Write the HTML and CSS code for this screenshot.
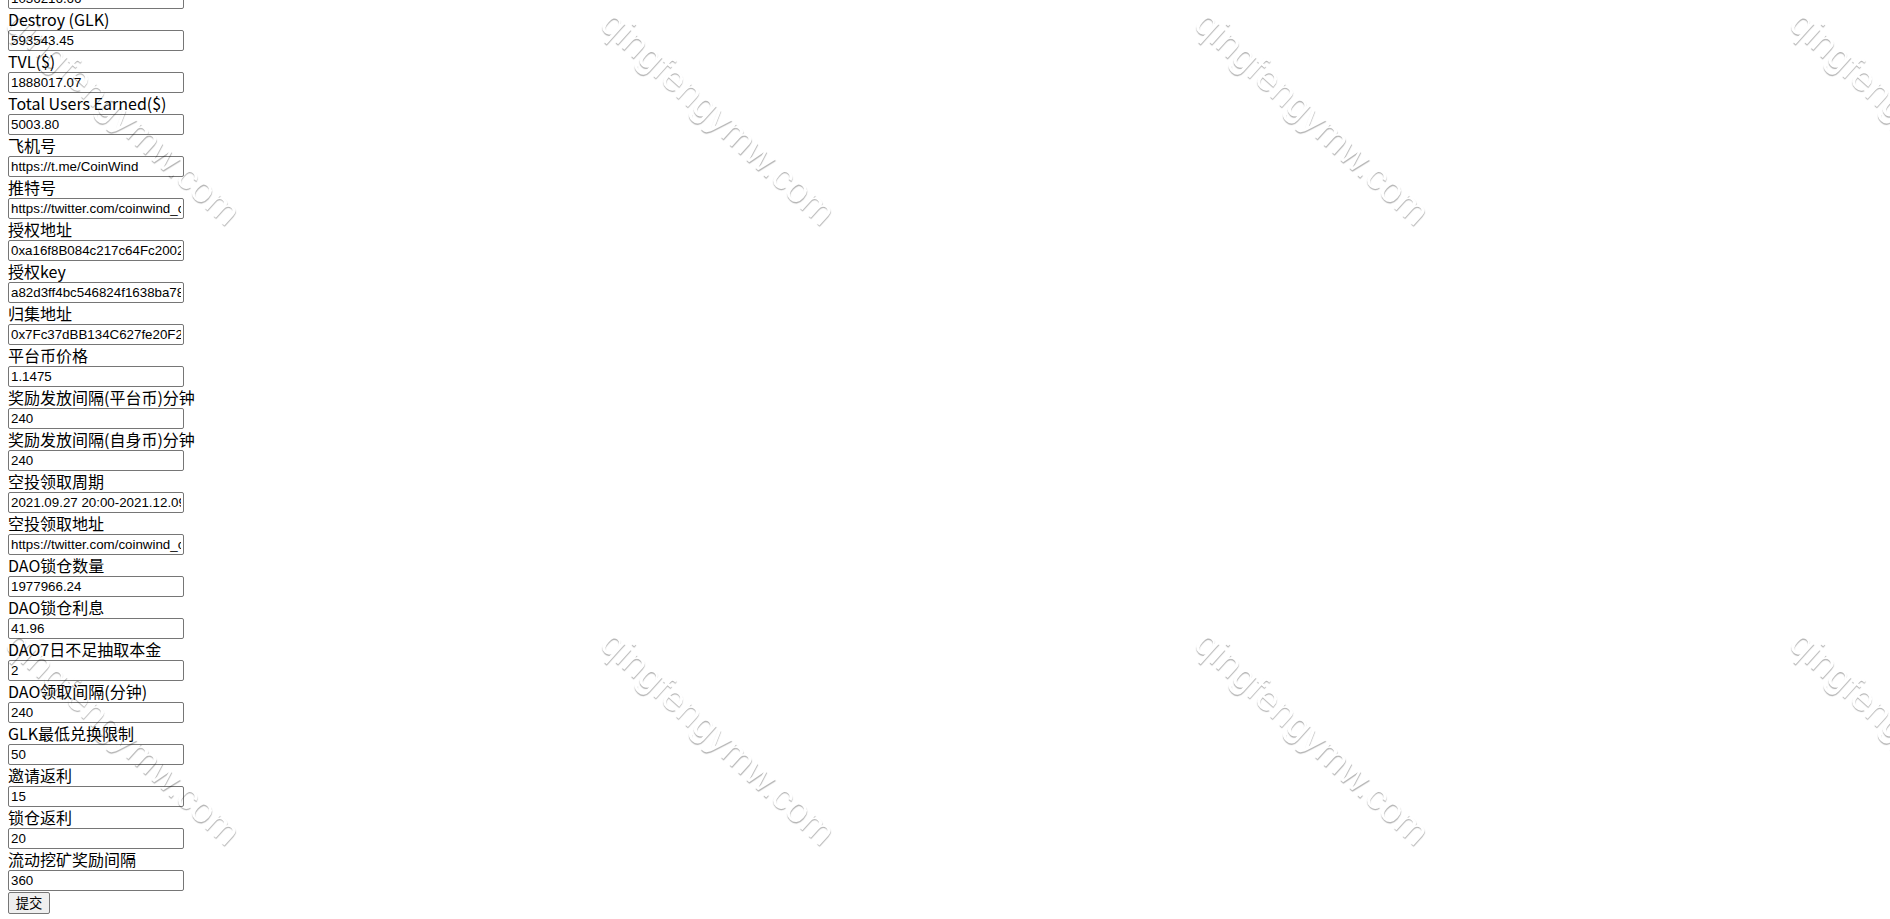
FILE: index.html
```html
<!DOCTYPE html>
<html lang="zh-CN">
<head>
<meta charset="utf-8">
<title>设置</title>
<link rel="stylesheet" href="styles.css">
</head>
<body>
<form class="settings">
  <input class="field field-cut" type="text" value="1036216.66">
  <label class="label">Destroy (GLK)</label>
  <input class="field" type="text" value="593543.45">
  <label class="label">TVL($)</label>
  <input class="field" type="text" value="1888017.07">
  <label class="label">Total Users Earned($)</label>
  <input class="field" type="text" value="5003.80">
  <label class="label">飞机号</label>
  <input class="field" type="text" value="https://t.me/CoinWind">
  <label class="label">推特号</label>
  <input class="field" type="text" value="https://twitter.com/coinwind_cn">
  <label class="label">授权地址</label>
  <input class="field" type="text" value="0xa16f8B084c217c64Fc20025D8e3b1a7F09c4E2a1">
  <label class="label">授权key</label>
  <input class="field" type="text" value="a82d3ff4bc546824f1638ba78e0c2d4b9f6a1e73">
  <label class="label">归集地址</label>
  <input class="field" type="text" value="0x7Fc37dBB134C627fe20F2b9d4A1c0E5f83b6D2e9">
  <label class="label">平台币价格</label>
  <input class="field" type="text" value="1.1475">
  <label class="label">奖励发放间隔(平台币)分钟</label>
  <input class="field" type="text" value="240">
  <label class="label">奖励发放间隔(自身币)分钟</label>
  <input class="field" type="text" value="240">
  <label class="label">空投领取周期</label>
  <input class="field" type="text" value="2021.09.27 20:00-2021.12.09 20:00">
  <label class="label">空投领取地址</label>
  <input class="field" type="text" value="https://twitter.com/coinwind_cn">
  <label class="label">DAO锁仓数量</label>
  <input class="field" type="text" value="1977966.24">
  <label class="label">DAO锁仓利息</label>
  <input class="field" type="text" value="41.96">
  <label class="label">DAO7日不足抽取本金</label>
  <input class="field" type="text" value="2">
  <label class="label">DAO领取间隔(分钟)</label>
  <input class="field" type="text" value="240">
  <label class="label">GLK最低兑换限制</label>
  <input class="field" type="text" value="50">
  <label class="label">邀请返利</label>
  <input class="field" type="text" value="15">
  <label class="label">锁仓返利</label>
  <input class="field" type="text" value="20">
  <label class="label">流动挖矿奖励间隔</label>
  <input class="field" type="text" value="360">
  <button class="submit" type="button">提交</button>
</form>

<div class="watermarks" aria-hidden="true">
  <div class="wm-cell"><span class="wm">qingfengymw.com</span></div>
  <div class="wm-cell"><span class="wm">qingfengymw.com</span></div>
  <div class="wm-cell"><span class="wm">qingfengymw.com</span></div>
  <div class="wm-cell"><span class="wm">qingfengymw.com</span></div>
  <div class="wm-cell"><span class="wm">qingfengymw.com</span></div>
  <div class="wm-cell"><span class="wm">qingfengymw.com</span></div>
  <div class="wm-cell"><span class="wm">qingfengymw.com</span></div>
  <div class="wm-cell"><span class="wm">qingfengymw.com</span></div>
</div>
</body>
</html>
```

FILE: styles.css
```css
html {
  overflow: hidden;
  background: #ffffff;
}

body {
  margin: 0 8px;
  color: #000000;
  font-family: "Noto Sans CJK SC", "Noto Sans", sans-serif;
  font-size: 16px;
}

.settings {
  display: flex;
  flex-direction: column;
  align-items: flex-start;
}

.label {
  display: block;
  height: 21px;
  line-height: 21px;
  font-size: 16px;
  white-space: nowrap;
}

.field {
  display: block;
  box-sizing: border-box;
  width: 176px;
  height: 21px;
  margin: 0;
  padding: 1px 2px;
  border: 1px solid #767676;
  border-radius: 2px;
  background: #ffffff;
  color: #000000;
  font-family: "Liberation Sans", Arial, sans-serif;
  font-size: 13.333px;
  line-height: 17px;
  outline: none;
}

.field-cut {
  margin-top: -12px;
}

.submit {
  display: block;
  box-sizing: border-box;
  height: 22px;
  width: 42px;
  margin: 1px 0 0;
  padding: 0 6px;
  border: 1px solid #767676;
  border-radius: 2px;
  background: #efefef;
  color: #000000;
  font-family: "Noto Sans CJK SC", sans-serif;
  font-size: 13.333px;
  line-height: 18px;
}

.watermarks {
  position: fixed;
  top: 0;
  left: 0;
  right: 0;
  bottom: 0;
  pointer-events: none;
  display: grid;
  grid-template-columns: repeat(4, 594.5px);
  grid-template-rows: repeat(2, 620px);
  padding: 1px 0 0 26px;
  overflow: hidden;
  mix-blend-mode: multiply;
}

.wm-cell {
  position: relative;
}

.wm {
  position: absolute;
  top: 0;
  left: 0;
  transform: rotate(42deg);
  transform-origin: 0 0;
  white-space: nowrap;
  font-family: "Liberation Sans", Arial, sans-serif;
  font-size: 37.5px;
  line-height: 43px;
  color: #ffffff;
  text-shadow: 1px 1px 1px rgba(0, 0, 0, 0.3);
}
```
